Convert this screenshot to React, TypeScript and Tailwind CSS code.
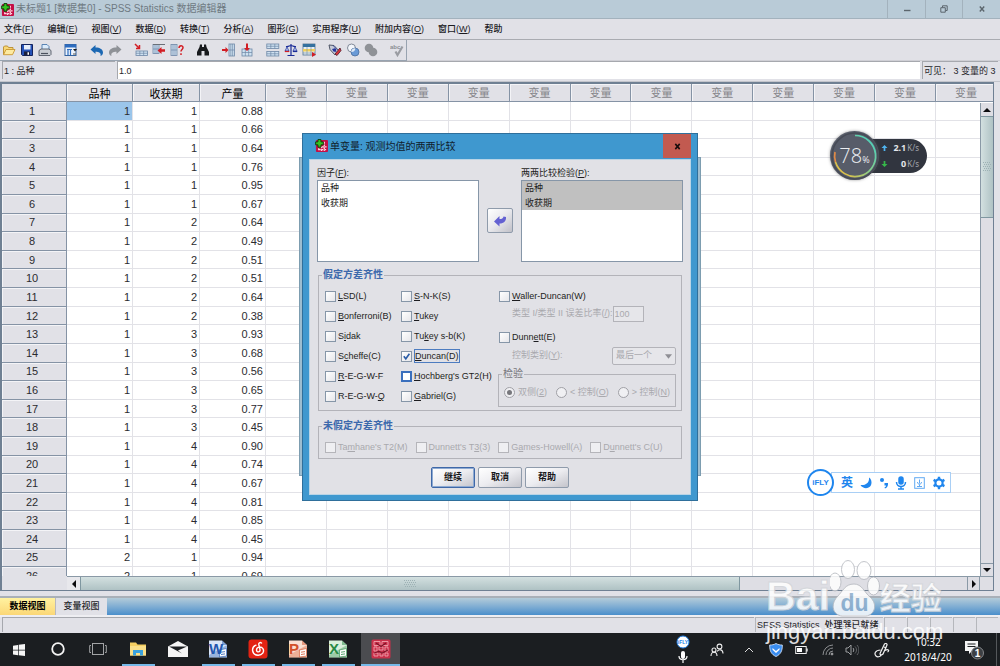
import React from "react";

const CASES: [number, number, string][] = [
  [1, 1, "0.88"], [1, 1, "0.66"], [1, 1, "0.64"], [1, 1, "0.76"], [1, 1, "0.95"], [1, 1, "0.67"],
  [1, 2, "0.64"], [1, 2, "0.49"], [1, 2, "0.51"], [1, 2, "0.51"], [1, 2, "0.64"], [1, 2, "0.38"],
  [1, 3, "0.93"], [1, 3, "0.68"], [1, 3, "0.56"], [1, 3, "0.65"], [1, 3, "0.77"], [1, 3, "0.45"],
  [1, 4, "0.90"], [1, 4, "0.74"], [1, 4, "0.67"], [1, 4, "0.81"], [1, 4, "0.85"], [1, 4, "0.45"],
  [2, 1, "0.94"], [2, 1, "0.69"],
];
const EMPTY = Array.from({ length: 12 }, (_, i) => i);

/** Renders a caption whose access key is marked by a preceding "_". */
function Caption({ text }: { text: string }) {
  const at = text.indexOf("_");
  if (at < 0) return <span>{text}</span>;
  return (
    <span>
      {text.slice(0, at)}
      <span className="underline underline-offset-1">{text[at + 1]}</span>
      {text.slice(at + 2)}
    </span>
  );
}

function AppLogo({ className }: { className: string }) {
  return (
    <svg viewBox="0 0 14 14" className={className} aria-hidden="true">
      <rect x="1" y="1" width="13" height="13" rx="1" fill="#c40f45" />
      <path d="M7.500 8.500h5M4 11.500h8.500M10 3v10M7 8v5M4 10v3" stroke="#ffd5df" strokeWidth="1.400" strokeDasharray="2 1" fill="none" />
      <path d="M3.200.6h3.200v2.500h2.500v3.200H6.400v2.500H3.200V6.300H.7V3.100h2.500z" fill="#35c321" stroke="#0b3d0a" strokeWidth="1" />
    </svg>
  );
}

function TitleBar() {
  return (
    <header className="flex h-[19px] shrink-0 items-center border-b border-[#a3b2bd] bg-[#b9cbd7] text-[10px] leading-[18px] text-[#6f7a82]">
      <AppLogo className="ml-px size-[13px]" />
      <h1 className="ml-[2px] flex-1">未标题1 [数据集0] - SPSS Statistics 数据编辑器</h1>
      <button aria-label="最小化" className="grid h-full w-[38px] place-items-center border-l border-[#a3b2bd]">
        <svg viewBox="0 0 8 8" className="size-2"><path d="M1 5.500h6.500" stroke="#5c666d" strokeWidth="1.400" /></svg>
      </button>
      <button aria-label="还原" className="grid h-full w-[37px] place-items-center border-l border-[#a3b2bd]">
        <svg viewBox="0 0 8 8" className="size-2" fill="none" stroke="#5c666d"><path d="M.8 2.700h4.500v4.500H.8zM2.500 2.500V.8h4.700v4.700H5.500" /></svg>
      </button>
      <button aria-label="关闭" className="grid h-full w-[38px] place-items-center border-l border-[#a3b2bd]">
        <svg viewBox="0 0 8 8" className="size-2"><path d="M1.800 1.500l4.400 5M6.200 1.500l-4.400 5" stroke="#5c666d" strokeWidth="1.400" /></svg>
      </button>
    </header>
  );
}

const MENUS = ["文件(_F)", "编辑(_E)", "视图(_V)", "数据(_D)", "转换(_T)", "分析(_A)", "图形(_G)", "实用程序(_U)", "附加内容(_O)", "窗口(_W)", "帮助"];

function MenuBar() {
  return (
    <nav className="flex h-[21px] shrink-0 items-center gap-[14px] border-b border-[#a9abb1] pl-1 text-[9px] font-medium leading-5 text-[#1b1b1f]">
      {MENUS.map((m) => (
        <button key={m} className="whitespace-nowrap"><Caption text={m} /></button>
      ))}
    </nav>
  );
}

const grid = (x: number, y: number, w: number, h: number) => (
  <g>
    <rect x={x} y={y} width={w} height={h} fill="#cfe1f1" stroke="#6d87a6" strokeWidth=".8" />
    <path d={`M${x} ${y + h / 2}h${w}M${x + w / 3} ${y}v${h}M${x + (2 * w) / 3} ${y}v${h}`} stroke="#6d87a6" strokeWidth=".7" />
  </g>
);

const TOOLS: [string, React.ReactNode][][] = [
  [
    ["打开", <g><path d="M1.500 11.500V4l1-1h3l1 1.500H11V6" fill="#f8d774" stroke="#b88a2d" strokeWidth=".9" /><path d="M1.500 11.700L4 6.500h9l-2.500 5.200z" fill="#fdeaa0" stroke="#c9962f" strokeWidth=".9" /></g>],
    ["保存", <g><path d="M1.500 1.500h11v11h-10l-1-1z" fill="#2552b8" stroke="#15245e" /><rect x="4" y="2" width="6.500" height="4.500" fill="#e6eefb" /><rect x="4" y="8.500" width="6" height="4" fill="#1a1f3d" /><rect x="7.500" y="9.300" width="1.500" height="2.500" fill="#fff" /></g>],
    ["打印", <g><path d="M4 7V1.500h5l2 2V7" fill="#dcecfb" stroke="#4b78ad" strokeWidth=".9" /><path d="M1 7.500l2-1.500h8l2 1.500v4l-1 1H1z" fill="#c9cdd3" stroke="#555b66" strokeWidth=".9" /><path d="M3 10.500h7" stroke="#4a505c" strokeWidth="1.200" /></g>],
  ],
  [["最近对话框", <g><rect x="1" y="1.500" width="11" height="11" fill="#eef4fc" stroke="#34639f" /><rect x="1" y="1.500" width="11" height="3" fill="#2c6cc0" /><path d="M4 6v6M6.500 6v6M3 6.500h5" stroke="#2c6cc0" strokeWidth="1.200" /><path d="M9 6h4l-2 2.500z" fill="#16181d" /><path d="M9 11h3" stroke="#555" /></g>]],
  [
    ["撤消", <path d="M.5 6.500L5.500 2v2.500c4.500 0 7.500 2 7.500 5 0 1.800-1 3-2.500 3.500.8-3-1.500-4.300-5-4.300V11z" fill="#1c68b3" />],
    ["重做", <path d="M13.500 6.500L8.500 2v2.500C4 4.500 1 6.500 1 9.500c0 1.800 1 3 2.500 3.500-.8-3 1.500-4.300 5-4.300V11z" fill="#8f9297" />],
  ],
  [
    ["转至个案", <g>{grid(2, 8, 11.5, 4.5)}<path d="M1 1l4 4M5.500 2v3.500H2" stroke="#d21d24" strokeWidth="1.500" fill="none" /></g>],
    ["转至变量", <g>{grid(1, 1.5, 6, 9)}<path d="M1 1.500h12" stroke="#6a7078" /><path d="M5.500 7.500l4-3.500v2.200H13v2.600H9.500V11z" fill="#d21d24" /></g>],
    ["变量", <g>{grid(1, 1.5, 6, 11)}<path d="M9 5c.2-3 4-2.700 4-.4 0 1.900-2 1.900-2 4M11 10.200v1.800" stroke="#d21d24" strokeWidth="1.500" fill="none" /></g>],
  ],
  [["查找", <path d="M4 1.500h2V4h2V1.500h2l.5 2.500L13 9v3.500H8.500V8h-3v4.500H1V9l2.500-5z" fill="#17191c" />]],
  [
    ["插入个案", <g>{grid(7, 1, 5.5, 12)}<path d="M6.500 7L3.500 4v2H0v2h3.500v2z" fill="#d21d24" /></g>],
    ["插入变量", <g>{grid(2, 6, 10, 7)}<path d="M7 8L4 5h2V.5h2V5h2z" fill="#d21d24" /></g>],
  ],
  [
    ["拆分文件", <g>{grid(0.8, 1, 12, 4.5)}{grid(0.8, 8.5, 12, 4.5)}</g>],
    ["加权个案", <g fill="none" stroke="#1b2c96" strokeWidth="1.200"><path d="M7 1v11M3.500 12.500h7M2 3.500c3 .5 3-1 5-1s2 1.500 5 1" /><path d="M1 8l2-4 2 4zM9 8l2-4 2 4z" fill="#b9c7ef" strokeWidth=".7" /><path d="M.8 8.500h4.500" stroke="#d21d24" /><path d="M8.800 8.500h4.500" /></g>],
    ["选择个案", <g><rect x="1" y="1" width="12" height="11" fill="#e6eef5" stroke="#52728e" strokeWidth=".8" /><rect x="1" y="1" width="12" height="3" fill="#34719f" /><rect x="1" y="6" width="12" height="2.500" fill="#f1cf5a" /><path d="M5 4v8M9 4v8M1 10h12" stroke="#7d95ab" strokeWidth=".7" /><path d="M10 9l4 2.500-4 2.500z" fill="#d21d24" /></g>],
  ],
  [
    ["值标签", <g strokeWidth=".9"><path d="M1 2l5 .5L11 8l-4 4-5-5.500z" fill="#c7cbd8" stroke="#42485a" /><path d="M5 2.500l4 4M4 6l4.500 3" stroke="#3d4ea3" /><path d="M7 11l5-6 1 2.500-4 5z" fill="#d7343a" stroke="#5a2030" /><circle cx="6.500" cy="7" r="1.800" fill="#26359b" /></g>],
    ["使用变量集", <g><circle cx="5.500" cy="5" r="4" fill="#f3f6fb" stroke="#808998" /><circle cx="9" cy="9" r="4" fill="#6a9ad6" stroke="#4a6d9d" strokeWidth=".8" /><path d="M5.200 8.900A4 4 0 0 1 9.400 5.200 4 4 0 0 1 5.200 8.900z" fill="#dfe9f6" /></g>],
    ["显示所有变量", <g fill="#8f9297"><circle cx="5" cy="5" r="4.300" /><circle cx="9" cy="9" r="4.300" /></g>],
  ],
  [["拼写检查", <g><path d="M5.500 8.500l2 3.500 5-8.500" stroke="#9a9ca2" strokeWidth="2.200" fill="none" /><text x="0" y="6" fontSize="6" fontWeight="bold" fill="#8a8d93">abc</text></g>]],
];

function ToolBar() {
  return (
    <div className="flex h-[21px] shrink-0">
      <div role="toolbar" className="flex items-center gap-2 border-b border-r border-[#98a3b0]">
        {TOOLS.map((group, i) => (
          <div key={i} className="flex">
            {group.map(([name, drawing]) => (
              <button key={name} aria-label={name} className="grid w-[18px] place-items-center">
                <svg viewBox="0 0 14 14" className="size-[14px]">{drawing}</svg>
              </button>
            ))}
          </div>
        ))}
      </div>
      <div className="flex-1 border-b border-[#cfcfd5]" />
    </div>
  );
}

function CellBar() {
  return (
    <div className="flex h-[21px] shrink-0 items-stretch gap-[2px] border-b border-[#c3c5cc] px-[2px] pb-[2px] text-[9px] leading-[18px] text-[#26262a]">
      <label htmlFor="cell" className="w-[113px] border-l border-t border-[#a6a8ae] pl-px">1 : 品种</label>
      <input id="cell" defaultValue="1.0" className="min-w-0 flex-1 border-l border-t border-[#a6a8ae] bg-white pl-px outline-none" />
      <div className="w-[76px] whitespace-nowrap border-l border-t border-[#a6a8ae] pl-px">可见： 3 变量的 3</div>
    </div>
  );
}

const Tri = ({ d }: { d: string }) => (
  <svg viewBox="0 0 8 8" className="size-2" aria-hidden="true"><path d={d} fill="#0b0b0d" /></svg>
);

function DataGrid() {
  return (
    <main className="mr-[6px] grid min-h-0 flex-1 grid-cols-[65px_1fr_13px] grid-rows-[19px_1fr_14px] overflow-hidden border-b border-l-2 border-r border-t-2 border-[#6f8093] bg-[#e1e1e7]">
      <div className="col-span-3 col-start-1 row-span-2 row-start-1 overflow-hidden">
        <table className="h-[502px] w-[calc(100%+4px)] table-fixed border-separate border-spacing-0 bg-white text-[11px] leading-[14px] text-[#2b2b2f]">
          <colgroup>
            <col className="w-[65px]" /><col className="w-[66px]" /><col className="w-[67px]" /><col className="w-[66px]" />
            {EMPTY.map((i) => <col key={i} />)}
          </colgroup>
          <thead>
            <tr className="h-[18px] bg-[#e1e1e7]">
              <th className="border-b border-r border-[#8593a5] p-0" />
              {["品种", "收获期", "产量"].map((h) => (
                <th key={h} className="border-b border-r border-[#8593a5] p-0 pt-[2px] font-normal text-black shadow-[inset_1px_1px_0_#f4f4f7]">{h}</th>
              ))}
              {EMPTY.map((i) => (
                <th key={i} className="border-b border-r border-[#8593a5] p-0 font-normal text-[#85858a] shadow-[inset_1px_1px_0_#f4f4f7]">变量</th>
              ))}
            </tr>
          </thead>
          <tbody>
            {CASES.map(([variety, harvest, yieldValue], r) => (
              <tr key={r}>
                <th className="border-b border-r border-[#8593a5] bg-[#e1e1e7] p-0 pr-1 font-normal shadow-[inset_1px_1px_0_#f4f4f7]">{r + 1}</th>
                <td className={r === 0 ? "border-b border-r border-[#e2e2e7] bg-[#9bc5ea] p-0 pr-[2px] text-right" : "border-b border-r border-[#e2e2e7] p-0 pr-[2px] text-right"}>{variety}</td>
                <td className="border-b border-r border-[#e2e2e7] p-0 pr-[2px] text-right">{harvest}</td>
                <td className="border-b border-r border-[#e2e2e7] p-0 pr-[2px] text-right">{yieldValue}</td>
                {EMPTY.map((i) => <td key={i} className="border-b border-r border-[#e2e2e7] p-0" />)}
              </tr>
            ))}
          </tbody>
        </table>
      </div>
      <div className="z-[1] col-start-3 row-start-2 flex flex-col border-l border-[#8a99a6] bg-[#dedee4]">
        <button aria-label="向上滚动" className="grid h-[13px] place-items-center"><Tri d="M4 2l4 4H0z" /></button>
        <div className="grid h-[102px] place-items-center border-y border-[#7f97a0] bg-linear-to-r from-[#d3e0e0] to-[#afc2c4]">
          <svg viewBox="0 0 8 12" className="h-3 w-2" stroke="#9db1b4" strokeDasharray="1 1"><path d="M0 1.500h8M1 3.500h7M0 5.500h8M1 7.500h7M0 9.500h8" /></svg>
        </div>
        <div className="flex-1" />
        <button aria-label="向下滚动" className="grid h-[13px] place-items-center border-t border-[#8a99a6]"><Tri d="M4 6l4-4H0z" /></button>
      </div>
      <div className="col-span-2 col-start-2 row-start-3 flex border-t border-[#8a99a6] bg-[#dedee4]">
        <button aria-label="向左滚动" className="grid w-[13px] place-items-center bg-[#e8e8ec]"><Tri d="M2 4l4-4v8z" /></button>
        <div className="grid grow-[656] place-items-center border-x border-[#7f97a0] bg-linear-to-b from-[#d3e0e0] to-[#afc2c4]">
          <svg viewBox="0 0 12 8" className="h-2 w-3" stroke="#9db1b4" strokeDasharray="1 1"><path d="M0 .5h12M1 2.500h11M0 4.500h12M1 6.500h11" /></svg>
        </div>
        <div className="grow-[231]" />
        <button aria-label="向右滚动" className="grid w-[13px] place-items-center border-x border-[#8a99a6]"><Tri d="M6 4L2 0v8z" /></button>
        <div className="w-[13px]" />
      </div>
    </main>
  );
}

function ViewTabs() {
  return (
    <div className="mt-[5px] flex h-[19px] shrink-0 border-t-2 border-[#a9b0b8] bg-linear-to-b from-[#b3cbd9] to-[#4a8fcb] text-[9px] leading-[17px]">
      <button className="w-[55px] bg-linear-to-b from-[#fff2a0] to-[#fbd776] font-bold text-black">数据视图</button>
      <button className="w-[52px] border-l border-[#b9b9bf] bg-[#e1e1e7] font-medium text-[#26262a]">变量视图</button>
    </div>
  );
}

function StatusBar() {
  return (
    <footer className="flex h-[18px] shrink-0 gap-px border-t-2 border-[#eeeef2] px-[2px] pb-px text-[9px] font-medium leading-[15px] text-[#26262a]">
      <div className="flex-1 border-l border-t border-[#a6a8ae]" />
      <div className="w-[128px] whitespace-nowrap border-l border-t border-[#b5b7bc] pl-px">SPSS Statistics&nbsp; 处理器已就绪</div>
      {[0, 1, 2, 3, 4].map((i) => <div key={i} className="w-[22px] border-l border-t border-[#b5b7bc]" />)}
    </footer>
  );
}

function Check({ label, on, active, disabled }: { label: string; on?: boolean; active?: boolean; disabled?: boolean }) {
  return (
    <label className={disabled ? "flex h-5 items-center gap-[2px] whitespace-nowrap text-[#a9a9ae]" : "flex h-5 items-center gap-[2px] whitespace-nowrap"}>
      <span className="grid size-[11px] shrink-0 *:col-start-1 *:row-start-1">
        <input
          type="checkbox"
          defaultChecked={on}
          disabled={disabled}
          className={
            active
              ? "size-[11px] appearance-none border-2 border-[#3a6fbd] bg-white"
              : disabled
                ? "size-[11px] appearance-none border border-[#b5b5ba] bg-[#efeff2]"
                : "size-[11px] appearance-none border border-[#8696a8] bg-linear-to-br from-white to-[#e6e6ea]"
          }
        />
        {on && <svg viewBox="0 0 11 11" className="pointer-events-none size-[11px]"><path d="M2.800 5.200l2 2.600 3.600-5" fill="none" stroke="#2b5da8" strokeWidth="1.600" /></svg>}
      </span>
      <span className={on ? "border border-[#4d7cc0] leading-[12px]" : "leading-[14px]"}><Caption text={label} /></span>
    </label>
  );
}

function Radio({ label, on }: { label: string; on?: boolean }) {
  return (
    <label className="flex items-center gap-[3px] whitespace-nowrap">
      <input type="radio" name="tail" disabled defaultChecked={on} className="grid size-[11px] appearance-none place-content-center rounded-full border border-[#a0a0a6] bg-[#f0f0f3] before:size-[5px] before:rounded-full checked:before:bg-[#77777c]" />
      <Caption text={label} />
    </label>
  );
}

function Dialog() {
  const push = "h-[21px] w-[44px] rounded-[2px] border bg-linear-to-br from-white via-[#ececf0] to-[#c4c4cb] text-[9px] font-bold leading-none text-[#18181b]";
  return (
    <>
      <div className="absolute left-[299px] top-[157px] h-[319px] w-[402px] border border-[#7d9db0] bg-[#9dbdd0]" />
      <section role="dialog" aria-labelledby="dialog-title" className="absolute left-[302px] top-[133px] w-[396px] border border-[#2f6f9b] bg-[#3f98cf] px-[6px] pb-[5px] text-[9px] text-[#1d1d21]">
        <div className="flex h-[25px] items-start">
          <AppLogo className="ml-[6px] mt-[5px] size-[13px]" />
          <h2 id="dialog-title" className="ml-[2px] flex-1 text-[10px] leading-[25px] text-[#10202c]">单变量: 观测均值的两两比较</h2>
          <button aria-label="关闭" className="grid h-6 w-[28px] place-items-center bg-[#c25a50]">
            <svg viewBox="0 0 8 8" className="size-[7px]"><path d="M1.500 1l5 6M6.500 1l-5 6" stroke="#1a0d0c" strokeWidth="1.800" /></svg>
          </button>
        </div>
        <div className="border border-[#b9d4e6] bg-[#e1e1e6] px-[7px] pb-[6px] pt-[7px]">
          <div className="flex gap-2">
            <div className="flex-1">
              <h3 className="leading-[13px]"><Caption text="因子(_F):" /></h3>
              <ul className="h-[82px] border border-[#8696a8] bg-white leading-[14px]">
                <li className="h-[15px] pl-[3px]">品种</li>
                <li className="h-[14px] pl-[3px]">收获期</li>
              </ul>
            </div>
            <button aria-label="移回" className="mt-[41px] grid h-[25px] w-[26px] place-items-center rounded-[2px] border border-[#8f9bab] bg-linear-to-br from-white via-[#e8e8ec] to-[#c0c0c8]">
              <svg viewBox="0 0 14 12" className="h-3 w-[14px]"><path d="M1 6.500L6.500 1v3C9 4 10 3.500 10.500 1.500L13 2c.3 4-2 6.500-6.500 6.500v3z" fill="#6461d2" /></svg>
            </button>
            <div className="flex-1">
              <h3 className="leading-[13px]"><Caption text="两两比较检验(_P):" /></h3>
              <ul className="h-[82px] border border-[#8696a8] bg-white leading-[14px]">
                <li className="h-[15px] bg-[#c0c0c0] pl-[3px]">品种</li>
                <li className="h-[14px] bg-[#c0c0c0] pl-[3px]">收获期</li>
              </ul>
            </div>
          </div>

          <fieldset className="mx-px mt-[6px] h-[143px] min-w-0 border border-[#b3b3b9] pl-[6px] pr-[5px]">
            <legend className="-ml-[3px] px-px text-[10px] font-bold leading-[14px] text-[#3d69ac]">假定方差齐性</legend>
            <div className="flex pt-[4px]">
              <div className="w-[76px] shrink-0">
                {["_LSD(L)", "_Bonferroni(B)", "S_idak", "S_cheffe(C)", "_R-E-G-W-F", "R-E-G-W-_Q"].map((l) => <Check key={l} label={l} />)}
              </div>
              <div className="w-[98px] shrink-0">
                <Check label="_S-N-K(S)" />
                <Check label="_Tukey" />
                <Check label="Tu_key s-b(K)" />
                <Check label="_Duncan(D)" on />
                <Check label="_Hochberg's GT2(H)" active />
                <Check label="_Gabriel(G)" />
              </div>
              <div className="min-w-0 flex-1">
                <Check label="_Waller-Duncan(W)" />
                <div className="flex h-4 items-center justify-between pl-[13px] pr-[33px] text-[#a9a9ae]">
                  <label htmlFor="ratio" className="whitespace-nowrap"><Caption text="类型 I/类型 II 误差比率(_/):" /></label>
                  <input id="ratio" disabled defaultValue="100" className="h-4 w-[31px] shrink-0 border border-[#b3b3b9] bg-[#e6e6ea] pl-px text-[#a9a9ae]" />
                </div>
                <div className="pt-[5px]"><Check label="Dunn_ett(E)" /></div>
                <div className="flex h-[18px] items-center justify-between pl-[13px] text-[#a9a9ae]">
                  <label htmlFor="control"><Caption text="控制类别(_Y):" /></label>
                  <span className="grid w-16 items-center *:col-start-1 *:row-start-1">
                    <select id="control" disabled className="h-[18px] w-full appearance-none rounded-[2px] border border-[#b3b3b9] bg-[#e6e6ea] pl-[3px] text-[#a9a9ae] opacity-100">
                      <option>最后一个</option>
                    </select>
                    <svg viewBox="0 0 8 5" className="mr-1 h-[5px] w-[7px] justify-self-end"><path d="M0 0h8L4 5z" fill="#8f8f95" /></svg>
                  </span>
                </div>
                <fieldset className="-ml-px mt-[3px] h-[39px] min-w-0 border border-[#b3b3b9] px-[5px] text-[#a9a9ae]">
                  <legend className="-ml-[2px] px-px text-[10px] leading-[12px] text-[#77777c]">检验</legend>
                  <div className="flex justify-between gap-1 pt-[5px] leading-[14px]">
                    <Radio label="双侧(_2)" on />
                    <Radio label="< 控制(_O)" />
                    <Radio label="> 控制(_N)" />
                  </div>
                </fieldset>
              </div>
            </div>
          </fieldset>

          <fieldset className="mx-px mt-2 h-10 min-w-0 border border-[#b3b3b9] px-[6px]">
            <legend className="-ml-[3px] px-px text-[10px] font-bold leading-[14px] text-[#3d69ac]">未假定方差齐性</legend>
            <div className="flex gap-[8px] pt-[4px]">
              <Check label="Ta_mhane's T2(M)" disabled />
              <Check label="Dunnett's T_3(3)" disabled />
              <Check label="G_ames-Howell(A)" disabled />
              <Check label="D_unnett's C(U)" disabled />
            </div>
          </fieldset>

          <div className="mt-2 flex justify-center gap-[3px]">
            <button className={`${push} border-[#3f68a8] shadow-[inset_0_0_0_1px_#8eaad2]`}>继续</button>
            <button className={`${push} border-[#8f9bab]`}>取消</button>
            <button className={`${push} border-[#8f9bab]`}>帮助</button>
          </div>
        </div>
      </section>
    </>
  );
}

function SpeedWidget() {
  return (
    <aside className="absolute left-[830px] top-[131px] flex items-center">
      <div className="z-[1] grid size-[49px] place-items-center rounded-full bg-[#575c69] shadow-[0_0_3px_#55555599] *:col-start-1 *:row-start-1">
        <svg viewBox="0 0 48 48" className="size-[48px]" fill="none" strokeWidth="1.700">
          <defs>
            <linearGradient id="ring" x1="1" y1="0" x2="0" y2="1">
              <stop offset="0" stopColor="#41cfc6" /><stop offset=".5" stopColor="#86cf8b" /><stop offset=".85" stopColor="#dcc14a" />
            </linearGradient>
          </defs>
          <circle cx="24" cy="24" r="23" stroke="#474b56" />
          <path d="M24 3.500A20.500 20.500 0 1 1 4.500 30" stroke="url(#ring)" />
          <path d="M4.500 30A20 20 0 0 1 4 20" stroke="#e08a46" />
        </svg>
        <p className="font-['Open_Sans'] text-[20px] font-light leading-none text-[#eceef2]">78<span className="text-[9px] font-normal">%</span></p>
      </div>
      <div className="-ml-[8px] h-[34px] w-[56px] rounded-r-full bg-[#31353f] pl-[10px] pr-2 pt-px font-['Noto_Sans'] text-[8px] leading-4 text-[#a2a6ae]">
        {[["#4fb4f0", "M4 0l3.500 3.500H5V7H3V3.500H.5z", "2.1"], ["#36b84a", "M4 7L.5 3.500H3V0h2v3.500h2.500z", "0"]].map(([c, d, v]) => (
          <p key={v} className="flex items-center justify-end gap-px">
            <svg viewBox="0 0 8 7" className="mr-auto h-[6px] w-[7px]"><path d={d} fill={c} /></svg>
            <b className="text-[9px] text-[#e4e6ea]">{v}</b>K/s
          </p>
        ))}
      </div>
    </aside>
  );
}

function ImeBar() {
  return (
    <aside className="absolute left-[807px] top-[469px] flex items-center text-[#1f86ee]">
      <div className="z-[1] grid size-[27px] place-items-center rounded-full border-2 border-[#1f86ee] bg-white text-[8px] font-bold leading-none">iFLY</div>
      <div className="-ml-[3px] flex h-[21px] w-[120px] items-center justify-between border border-[#a9cff5] bg-white pl-[9px] pr-[4px]">
        <span className="text-[12px] font-bold leading-none">英</span>
        <svg viewBox="0 0 12 12" className="size-3"><path d="M9 .5c.5 5-3 8-8.500 7.500C3.500 13 11.500 12 11.500 5.500 11.500 3 10.500 1.500 9 .5z" fill="currentColor" /></svg>
        <svg viewBox="0 0 10 12" className="h-3 w-[10px]" fill="currentColor"><circle cx="3" cy="3" r="2" /><path d="M5.500 6h3.500c.3 3-.8 4.700-3 5.500l-.5-1c1-.5 1.500-1 1.500-2H5.500z" /></svg>
        <svg viewBox="0 0 12 14" className="h-[14px] w-3" fill="none" stroke="currentColor" strokeWidth="1.500"><rect x="4" y="1" width="4" height="7" rx="2" fill="currentColor" /><path d="M1.500 6c0 6 9 6 9 0M6 10.500V13M3 13h6" /></svg>
        <svg viewBox="0 0 11 12" className="h-3 w-[11px] opacity-70" fill="none" stroke="currentColor"><rect x=".7" y=".7" width="9.600" height="10.600" /><path d="M5.500 2.500v4M3.500 5c0 3 4 3 4 0M5.500 7.500v1.500M3 9.500h5" /></svg>
        <svg viewBox="0 0 14 14" className="size-[14px]" fill="none" stroke="currentColor"><circle cx="7" cy="7" r="3.600" strokeWidth="2.200" /><path d="M7 .8v2.500M7 10.700v2.500M1.600 3.900l2.200 1.200M10.200 8.900l2.200 1.200M1.600 10.100l2.200-1.200M10.200 5.100l2.200-1.200" strokeWidth="2.400" /></svg>
      </div>
    </aside>
  );
}

const Office = ({ letter, color, light }: { letter: string; color: string; light: string }) => (
  <svg viewBox="0 0 20 20" className="size-5">
    <path d="M1 1.500h13l5 4.500v12.500H1z" fill={light} />
    <path d="M14 1.500l5 4.500h-5z" fill={color} opacity=".5" />
    <path d="M19 6v12.500H1V16z" fill={color} opacity=".35" />
    <path d="M11.500 11l7-1.500v7.500l-7 1z" fill="#fff" stroke={color} strokeWidth=".6" />
    <path d="M13 13.200l4-.6M13 15.500l4-.6" stroke={color} strokeWidth=".8" />
    <text x="1" y="14.500" fontSize="15" fontWeight="bold" fontFamily="Liberation Sans" fill={color}>{letter}</text>
  </svg>
);

const APPS: [string, boolean, React.ReactNode][] = [
  ["搜索", false, <svg viewBox="0 0 16 16" className="size-4"><circle cx="8" cy="8" r="5.800" fill="none" stroke="#f3f3f3" strokeWidth="1.800" /></svg>],
  ["任务视图", false, <svg viewBox="0 0 18 14" className="h-[14px] w-[18px]" fill="none" stroke="#a2a4a6"><rect x="3.500" y="1.500" width="11" height="11" /><path d="M2 3.500H.7v7H2M16 3.500h1.300v7H16" /></svg>],
  ["文件资源管理器", true, <svg viewBox="0 0 18 16" className="h-4 w-[18px]"><path d="M1 1.500h6l1.500 2H17v11H1z" fill="#f6cf62" /><path d="M1 5h16v9.500H1z" fill="#fbe08a" /><path d="M4 14.500V9h10v5.500h-3V12H7v2.500z" fill="#3ba2de" /></svg>],
  ["邮件", false, <svg viewBox="0 0 20 16" className="h-4 w-5"><path d="M0 5.500L10 0l10 5.500V16H0z" fill="#f5f5f5" /><path d="M1 5.500h18L10 9.500l4 3z" fill="#1c1f22" /></svg>],
  ["Word", true, <Office letter="W" color="#2357ae" light="#d8e5f8" />],
  ["音乐", true, <svg viewBox="0 0 20 20" className="size-5"><rect x=".5" y=".5" width="19" height="19" rx="3" fill="#e32313" /><path d="M13.500 4c-1.500-1-3 0-2.700 1.500l1.200 5.200c.5 2.600-3.500 3-3.500.2 0-3 4.500-3.900 6.400-1.200 1.800 3-.6 6.500-4.700 6.500-6.500 0-7.500-8-2.200-10" fill="none" stroke="#fff" strokeWidth="1.400" strokeLinecap="round" /></svg>],
  ["PowerPoint", true, <Office letter="P" color="#d2522b" light="#fbe0d2" />],
  ["Excel", true, <Office letter="X" color="#2a8a45" light="#d9efdb" />],
];

const Tray = ({ name, width, children }: { name: string; width: string; children: React.ReactNode }) => (
  <button aria-label={name} className={`grid h-full place-items-center ${width}`}>{children}</button>
);

function TaskBar() {
  return (
    <nav className="flex h-[33px] shrink-0 items-stretch bg-[#1b1e21] text-white">
      <button aria-label="开始" className="grid w-[38px] place-items-center">
        <svg viewBox="0 0 12 12" className="size-3" fill="#f5f5f5"><path d="M0 1.700l5-.8v4.800H0zM5.700.8L12 0v5.700H5.700zM0 6.400h5v4.800l-5-.8zM5.700 6.400H12V12l-6.300-.8z" /></svg>
      </button>
      {APPS.map(([name, open, icon]) => (
        <button key={name} aria-label={name} className="flex w-10 flex-col items-center">
          <span className="grid flex-1 place-items-center">{icon}</span>
          <span className={open ? "h-[2px] w-[33px] bg-[#76b9e8]" : "h-[2px]"} />
        </button>
      ))}
      <button aria-label="SPSS Statistics" className="ml-[3px] flex w-[39px] flex-col items-center bg-[#4b4c50]">
        <span className="grid flex-1 place-items-center">
          <svg viewBox="0 0 20 20" className="size-5"><rect x=".5" y=".5" width="19" height="19" rx="1.500" fill="#c9304a" /><path d="M3 2.500h6v4H3zM11 2.500h6v4h-6zM3 8h3v4H3zM8 8h4v3H8zM14 8h3v4h-3zM3 14h4v3H3zM9 13.500h3v3.500H9zM14 14h3v3h-3z" fill="none" stroke="#f0a0ad" strokeWidth=".9" /><path d="M5 4l5 3.500L15 4M3 14l5-1.500 3 1.500 6-3" fill="none" stroke="#7e1328" strokeWidth="1.200" /></svg>
        </span>
        <span className="h-[2px] w-full bg-[#76b9e8]" />
      </button>
      <div className="flex-1" />
      <Tray name="语音输入" width="w-[34px]">
        <svg viewBox="0 0 14 30" className="h-[30px] w-[14px]"><circle cx="7" cy="7" r="6" fill="#fff" stroke="#2483e8" /><text x="7" y="9" textAnchor="middle" fontSize="5" fontWeight="bold" fill="#2483e8">iFLY</text><rect x="5" y="16" width="4" height="8" rx="2" fill="#fff" /><path d="M3 21c0 5 8 5 8 0M7 25v3" fill="none" stroke="#fff" strokeWidth="1.200" /></svg>
      </Tray>
      <Tray name="人脉" width="w-[34px]">
        <svg viewBox="0 0 14 14" className="size-[14px]" fill="none" stroke="#eee" strokeWidth="1.100"><circle cx="9.500" cy="3.500" r="2.400" /><circle cx="4" cy="7" r="2" /><path d="M1 13c0-5 6-5 6 0M7 8.500c2-3 6-2 6 2" /></svg>
      </Tray>
      <Tray name="显示隐藏的图标" width="w-[30px]">
        <svg viewBox="0 0 10 6" className="h-[6px] w-[10px]"><path d="M1 5l4-4 4 4" fill="none" stroke="#ddd" /></svg>
      </Tray>
      <Tray name="安全" width="w-6">
        <svg viewBox="0 0 14 14" className="size-[14px]"><path d="M7 .5c2 1.200 4 1.500 6.300 1.500C13.500 8 11.500 11.500 7 13.500 2.500 11.500.5 8 .7 2 3 2 5 1.700 7 .5z" fill="#3a8df0" stroke="#dfeeff" strokeWidth=".8" /><path d="M3.500 5L7 8l3.500-3v1.700L7 10 3.500 6.700z" fill="#fff" /></svg>
      </Tray>
      <Tray name="电池" width="w-[26px]">
        <svg viewBox="0 0 13 10" className="h-[10px] w-[13px]"><rect x=".7" y="1.500" width="10.500" height="7" fill="none" stroke="#eee" /><rect x="2" y="3" width="5" height="4" fill="#fff" /><path d="M12 3.500v3" stroke="#eee" strokeWidth="1.400" /></svg>
      </Tray>
      <Tray name="网络" width="w-[27px]">
        <svg viewBox="0 0 12 12" className="size-3" fill="none" stroke="#8d8f92"><path d="M1 11A10 10 0 0 1 11 1M4 11a7 7 0 0 1 7-7M7 11a4 4 0 0 1 4-4" /><circle cx="10" cy="10" r="1" fill="#ddd" /></svg>
      </Tray>
      <Tray name="音量" width="w-[22px]">
        <svg viewBox="0 0 14 12" className="h-3 w-[14px]" fill="none" stroke="#9b9da0"><path d="M1 4h2l3-3v10L3 8H1zM8 4c1 1 1 3 0 4" /><path d="M10 2.500c2 2 2 5 0 7M12 1c2.500 3 2.500 7 0 10" stroke="#606366" /></svg>
      </Tray>
      <Tray name="手写笔" width="w-[37px]">
        <svg viewBox="0 0 16 16" className="size-4" fill="none" stroke="#f1f1f1" strokeWidth="1.200"><path d="M6 11.500L10.500 2c.5-1 3-.3 2.500 1L9 12l-2.500 1.500zM10 5l2.500 1M6.500 8C1 8 0 12 2 14s5 0 5.500-1.500M11 8.500c3-2 5 0 2.500 1.500" /></svg>
      </Tray>
      <time dateTime="2018-04-20T10:32" className="w-14 pt-[2px] text-center font-['Noto_Sans'] text-[10px] leading-[15px]">10:32<br />2018/4/20</time>
      <Tray name="通知" width="w-9">
        <svg viewBox="0 0 20 20" className="size-5"><path d="M1 1h13v10H8l-3 3v-3H1z" fill="#f5f5f5" /><path d="M3.500 4h8M3.500 6.500h8" stroke="#1b1e21" /><circle cx="13.500" cy="13" r="6" fill="#3c3f43" stroke="#85888b" /><text x="13.500" y="16.500" textAnchor="middle" fontSize="10" fontWeight="bold" fill="#fff">1</text></svg>
      </Tray>
      <div className="mr-[3px] w-[5px] border-r border-[#55585b]" />
    </nav>
  );
}

function Watermark() {
  return (
    <div className="pointer-events-none absolute left-[766px] top-[559px] w-[180px] text-white opacity-85">
      <div className="flex h-[58px] items-end">
        <span className="text-[41px] font-bold leading-[42px] [-webkit-text-stroke:1px_#d3d6da]">Bai</span>
        <svg viewBox="0 0 50 57" className="h-[57px] w-[50px]" fill="#fff" stroke="#b9bcc2" strokeWidth="1">
          <ellipse cx="5" cy="22" rx="6" ry="9" /><ellipse cx="18" cy="9.500" rx="6.500" ry="9" /><ellipse cx="34" cy="10.500" rx="7" ry="9" /><ellipse cx="43.500" cy="26" rx="6" ry="9" />
          <path d="M24 24c8 0 10 8 16 13 8 7 5 18-4 19H12C3 55 0 45 7 37c6-6 8-13 17-13z" />
          <text x="24.500" y="51" textAnchor="middle" fontSize="23" fontWeight="bold" fill="#8fb0cf" stroke="none">du</text>
        </svg>
        <span className="text-[31px] font-bold leading-[36px] [-webkit-text-stroke:1px_#d3d6da]">经验</span>
      </div>
      <p className="text-[22px] leading-[30px]">jingyan.baidu.com</p>
    </div>
  );
}

export default function App() {
  return (
    <div lang="zh-CN" className="relative flex h-screen min-h-[666px] flex-col overflow-hidden bg-[#e1e1e7] font-['Liberation_Sans','Noto_Sans_CJK_SC',sans-serif]">
      <TitleBar />
      <MenuBar />
      <ToolBar />
      <CellBar />
      <DataGrid />
      <ViewTabs />
      <StatusBar />
      <TaskBar />
      <SpeedWidget />
      <ImeBar />
      <Dialog />
      <Watermark />
    </div>
  );
}
